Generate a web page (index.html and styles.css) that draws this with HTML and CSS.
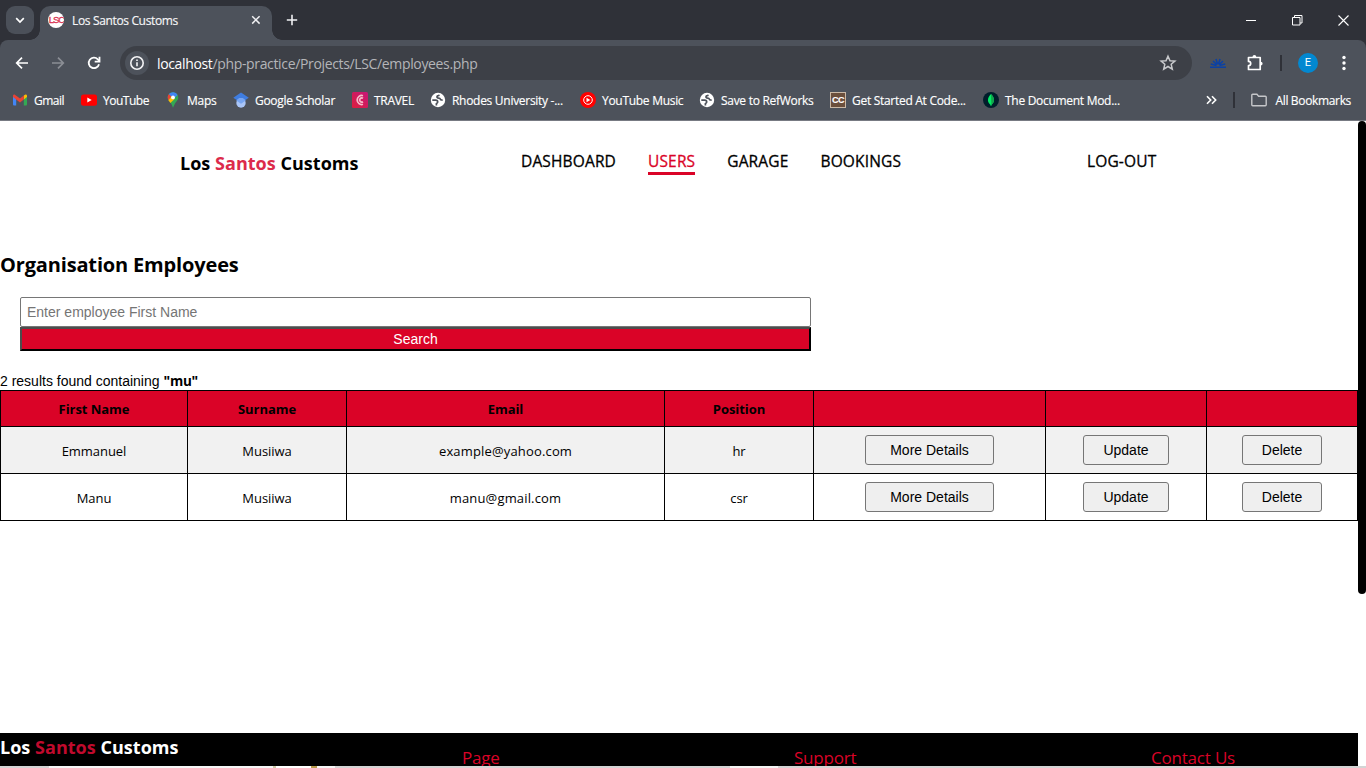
FILE: index.html
```html
<!DOCTYPE html>
<html lang="en">
<head>
<meta charset="utf-8">
<title>Los Santos Customs</title>
<link rel="stylesheet" href="styles.css">
</head>
<body>
<div class="browser">
  <div class="tabstrip">
    <div class="tab-search"><svg width="22" height="22" viewBox="0 0 22 22" fill="none" stroke="#fff" stroke-width="1.7"><path d="M7.2 9.2l3.8 3.8 3.8-3.8"/></svg></div>
    <div class="tab">
      <span class="favicon"><span>LSC</span></span>
      <span class="tab-title">Los Santos Customs</span>
      <svg class="tab-close" width="10" height="10" viewBox="0 0 10 10" stroke="#f1f1f3" stroke-width="1.5"><path d="M1.2 1.2l7.4 7.4M8.600 1.200L1.200 8.600"/></svg>
    </div>
    <svg class="new-tab" width="12" height="12" viewBox="0 0 12 12" stroke="#f1f1f3" stroke-width="1.6"><path d="M6 .8v10.400M.8 6h10.400"/></svg>
    <div class="window-controls">
      <svg width="10" height="11" viewBox="0 0 10 11"><path d="M0 5.500h10" stroke="#fff"/></svg>
      <svg width="11" height="11" viewBox="0 0 11 11" fill="none" stroke="#fff"><path d="M.5 2.500h7.500v7.500H.5zM2.500 2.500V.5h7.500V8H8"/></svg>
      <svg width="11" height="11" viewBox="0 0 11 11" stroke="#fff" stroke-width="1.100"><path d="M.5.500l10 10M10.500.500l-10 10"/></svg>
    </div>
  </div>

  <div class="toolbar">
    <div class="nav-buttons">
      <svg width="16" height="16" viewBox="0 0 16 16" fill="none" stroke="#fff" stroke-width="1.700"><path d="M14 8H3M8 2.700L2.700 8 8 13.300"/></svg>
      <svg width="16" height="16" viewBox="0 0 16 16" fill="none" stroke="#8b8e95" stroke-width="1.700"><path d="M2 8h11M8 2.700L13.300 8 8 13.300"/></svg>
      <svg width="16" height="16" viewBox="0 0 16 16" fill="none" stroke="#fff" stroke-width="1.800"><path d="M13 9.200A5.200 5.200 0 1 1 11.800 4.400L13.300 6"/><path d="M13.500 1.800v4.900H8.700" /></svg>
    </div>
    <div class="omnibox">
      <span class="site-info"><svg width="16" height="16" viewBox="0 0 16 16" fill="none" stroke="#f3f3f5" stroke-width="1.600"><circle cx="8" cy="8" r="6.200"/><path d="M8 7.200v4.100M8 4.500v1.500"/></svg></span>
      <span class="url"><b>localhost</b>/php-practice/Projects/LSC/employees.php</span>
      <svg class="star" width="18" height="18" viewBox="0 0 18 18" fill="none" stroke="#c8c9cc" stroke-width="1.500"><path d="M9 2.200l2 4.500 4.900.4-3.700 3.200 1.100 4.800L9 12.500l-4.300 2.600 1.100-4.800-3.700-3.200 4.900-.4z"/></svg>
    </div>
    <div class="toolbar-end">
      <svg width="16" height="10" viewBox="0 0 16 10" stroke="#0b41a4" stroke-width="1.600"><path d="M0 9.200h16M6.500 7.500L.8 6M7 6.800L3 3M7.600 6.500L6 1M8.400 6.500L10 1M9 6.800L13 3M9.500 7.500L15.200 6"/></svg>
      <svg width="18" height="18" viewBox="0 0 18 18" fill="none" stroke="#fff" stroke-width="1.700"><path d="M2.500 3.500h11.700v12H2.500v-3.900c1.500 0 2.200-1 2.200-2.100S4 7.400 2.500 7.400z" stroke-linejoin="round"/><path d="M6.500 3a1.900 1.900 0 0 1 3.800 0zM14.700 7.700a1.900 1.900 0 0 1 0 3.800z" fill="#fff" stroke="none"/></svg>
      <i class="divider"></i>
      <span class="avatar">E</span>
      <svg width="4" height="16" viewBox="0 0 4 16" fill="#fff"><circle cx="2" cy="2.500" r="1.700"/><circle cx="2" cy="8" r="1.700"/><circle cx="2" cy="13.500" r="1.700"/></svg>
    </div>
  </div>

  <div class="bookmarks">
    <div class="bookmark-list">
      <span class="bookmark tight"><svg width="16" height="16" viewBox="0 0 16 16"><path d="M1 3.500L4.200 6v7.500H2a1 1 0 0 1-1-1z" fill="#4285f4"/><path d="M15 3.500L11.800 6v7.500H14a1 1 0 0 0 1-1z" fill="#34a853"/><path d="M11.800 3.500L13 2.700c1-.6 2 0 2 1.200V5l-3.200 2.500z" fill="#fbbc04"/><path d="M1 5V4c0-1.200 1.200-1.900 2.200-1.100L8 6.500l3.800-3v4L8 10.400z" fill="#ea4335"/></svg>Gmail</span>
      <span class="bookmark tight"><svg width="16" height="16" viewBox="0 0 16 16"><rect y="2.400" width="16" height="11.400" rx="2.500" fill="#f00"/><path d="M6.300 5.600v5L10.700 8.100z" fill="#fff"/></svg>YouTube</span>
      <span class="bookmark"><svg width="16" height="16" viewBox="0 0 16 16"><path d="M8 .2a5.300 5.300 0 0 1 5.300 5.300c0 3-2.900 4.300-4 7.500L8 15.800l-1.100-2.700C5.800 10 2.700 8.500 2.700 5.500A5.300 5.300 0 0 1 8 .2z" fill="#34a853"/><path d="M3.400 8.200L7 4 4 2C2.400 3.500 2.300 6 3.400 8.200z" fill="#ea4335"/><path d="M3.900 2.100A5.300 5.300 0 0 1 12.600 3L8.500 7z" fill="#4285f4"/><path d="M3.400 8.200L6.600 4.300l3 2.700-4.200 4z" fill="#fbbc04"/><circle cx="8" cy="5.400" r="1.900" fill="#fff"/></svg>Maps</span>
      <span class="bookmark"><svg width="16" height="16" viewBox="0 0 16 16"><path d="M8 .5l7.800 5.200L8 11 .3 5.700z" fill="#3f7de0"/><circle cx="8" cy="11" r="4.700" fill="#a9c5f8"/><path d="M3.200 8.500Q8 3.600 12.800 8.500L8 11.700z" fill="#77a5f2"/></svg>Google Scholar</span>
      <span class="bookmark"><svg width="16" height="16" viewBox="0 0 16 16"><defs><linearGradient id="travel" x1="0" y1="1" x2="1" y2="0"><stop stop-color="#dc1f3e"/><stop offset="1" stop-color="#c51779"/></linearGradient></defs><rect width="16" height="16" rx="1.500" fill="url(#travel)"/><g fill="none" stroke="#f6bccb" stroke-width="1.700"><path d="M11 3.700a4.500 4.500 0 1 0 0 8.600"/><path d="M11 6.300a2.100 2.100 0 1 0 0 3.400"/></g></svg>TRAVEL</span>
      <span class="bookmark"><svg width="16" height="16" viewBox="0 0 16 16"><circle cx="8" cy="8" r="7.200" fill="#fff"/><path d="M2.300 8.200h3.400c1.300 0 2 .8 2 1.800 0 .9-.7 1.200-1.300 1.700v1.800M12.600 7.600c-1 .8-2.200.3-2.400-.8-.2-1-1.500-.6-2.500-.9-1.300-.5-.8-2 .5-2.300l1.400-.4" fill="none" stroke="#4d525b" stroke-width="1.700"/></svg>Rhodes University -...</span>
      <span class="bookmark"><svg width="16" height="16" viewBox="0 0 16 16"><circle cx="8" cy="8" r="8" fill="#f00"/><circle cx="8" cy="8" r="4.300" fill="none" stroke="#fff"/><path d="M6.500 5.700v4.600L10.300 8z" fill="#fff"/></svg>YouTube Music</span>
      <span class="bookmark"><svg width="16" height="16" viewBox="0 0 16 16"><circle cx="8" cy="8" r="7.200" fill="#fff"/><path d="M2.300 8.200h3.400c1.300 0 2 .8 2 1.800 0 .9-.7 1.200-1.300 1.700v1.800M12.600 7.600c-1 .8-2.200.3-2.400-.8-.2-1-1.500-.6-2.500-.9-1.300-.5-.8-2 .5-2.300l1.400-.4" fill="none" stroke="#4d525b" stroke-width="1.700"/></svg>Save to RefWorks</span>
      <span class="bookmark"><span class="cc-icon">CC</span>Get Started At Code...</span>
      <span class="bookmark"><svg width="16" height="16" viewBox="0 0 16 16"><circle cx="8" cy="8" r="8" fill="#001e2b"/><path d="M8 2c4 4 4 8 .4 11v1h-.8v-1C4 10 4 6 8 2z" fill="#00ed64"/><path d="M8 2c4 4 4 8 .4 11z" fill="#12a34b"/></svg>The Document Mod...</span>
    </div>
    <div class="bookmarks-end">
      <svg width="11" height="10" viewBox="0 0 11 10" fill="none" stroke="#fff" stroke-width="1.600"><path d="M1 1.200L4.700 5 1 8.800M6 1.200L9.700 5 6 8.800"/></svg>
      <i class="divider"></i>
      <span class="bookmark all"><svg width="16" height="16" viewBox="0 0 16 16" fill="none" stroke="#c5c6c9" stroke-width="1.400"><path d="M.8 3.200q0-.9.900-.9h4.200l1.700 1.900h6.700q.9 0 .9.900v7.700q0 .9-.9.900H1.700q-.9 0-.9-.9z"/></svg>All Bookmarks</span>
    </div>
  </div>

  <div class="viewport">
    <div class="page">
      <header class="site-header">
        <div class="logo">Los <span>Santos</span> Customs</div>
        <nav class="menu">
          <a>DASHBOARD</a><a class="active">USERS</a><a>GARAGE</a><a>BOOKINGS</a>
        </nav>
        <a class="logout">LOG-OUT</a>
      </header>
      <main class="content">
        <h2>Organisation Employees</h2>
        <form class="search">
          <input type="text" placeholder="Enter employee First Name">
          <button type="button">Search</button>
        </form>
        <p class="results">2 results found containing <b>"<span>mu</span>"</b></p>
        <table class="employees">
          <colgroup><col class="c1"><col class="c2"><col class="c3"><col class="c4"><col class="c5"><col class="c6"><col class="c7"></colgroup>
          <tr><th>First Name</th><th>Surname</th><th>Email</th><th>Position</th><th></th><th></th><th></th></tr>
          <tr><td>Emmanuel</td><td>Musiiwa</td><td class="email">example@yahoo.com</td><td>hr</td><td><button class="details">More Details</button></td><td><button class="update">Update</button></td><td><button class="delete">Delete</button></td></tr>
          <tr><td>Manu</td><td>Musiiwa</td><td class="email">manu@gmail.com</td><td>csr</td><td><button class="details">More Details</button></td><td><button class="update">Update</button></td><td><button class="delete">Delete</button></td></tr>
        </table>
      </main>
      <footer class="site-footer">
        <div class="logo">Los <span>Santos</span> Customs</div>
        <div class="footer-col">Page</div>
        <div class="footer-col">Support</div>
        <div class="footer-col">Contact Us</div>
      </footer>
    </div>
    <div class="scrollbar"><div class="thumb"></div></div>
  </div>
  <div class="screen-edge"></div>
</div>
</body>
</html>
```
FILE: styles.css
```css
* { box-sizing: border-box; }
body { margin: 0; background: #fff; color: #000; font-family: "Open Sans", "Noto Sans", sans-serif; overflow: hidden; }
svg { display: block; flex: none; }
.browser { width: 1366px; height: 768px; display: flex; flex-direction: column; background: #2f3138; }

/* Tab strip */
.tabstrip { height: 40px; display: flex; align-items: center; padding-left: 6px; flex: none; }
.tab-search { width: 28px; height: 28px; border-radius: 9px; background: #4b5059; display: flex; align-items: center; justify-content: center; }
.tab { position: relative; width: 232px; height: 34px; margin: 6px 0 0 6px; padding: 0 11px 6px 8px; border-radius: 10px 10px 0 0; background: #4d525b; display: flex; align-items: center; color: #f6f6f8; }
.tab::before, .tab::after { content: ""; position: absolute; bottom: 0; width: 10px; height: 10px; }
.tab::before { left: -10px; background: radial-gradient(circle at 0 0, transparent 9.500px, #4d525b 10px); }
.tab::after { right: -10px; background: radial-gradient(circle at 100% 0, transparent 9.500px, #4d525b 10px); }
.favicon { width: 16px; height: 16px; border-radius: 50%; background: #fff; display: flex; align-items: center; justify-content: center; overflow: hidden; color: #d9304f; font: 9.500px/16px "Liberation Sans", sans-serif; letter-spacing: -1px; -webkit-text-stroke: .3px; }
.favicon span { margin-right: -1px; }
.tab-title { flex: 1; margin-left: 8px; font-size: 12px; font-weight: 500; letter-spacing: -.35px; -webkit-text-stroke: .15px; }
.new-tab { margin-left: 14px; }
.window-controls { margin-left: auto; padding-right: 17px; display: flex; align-items: center; gap: 35.500px; }

/* Address row */
.toolbar { height: 46px; flex: none; display: flex; align-items: center; background: #4d525b; border-radius: 8px 8px 0 0; }
.nav-buttons { display: flex; gap: 20px; padding-left: 14px; width: 120px; }
.omnibox { width: 1072px; height: 34px; border-radius: 17px; background: #3d4047; display: flex; align-items: center; padding: 0 15px 0 5px; }
.site-info { width: 24px; height: 24px; border-radius: 50%; background: #4d525b; display: flex; align-items: center; justify-content: center; }
.url { flex: 1; margin-left: 8px; font-size: 14px; letter-spacing: -.35px; color: #b4b5b9; white-space: pre; }
.url b { font-weight: 400; color: #fff; }
.toolbar-end { flex: 1; display: flex; align-items: center; padding-left: 18px; }
.toolbar-end svg:nth-child(2) { margin-left: 20px; }
.toolbar-end .divider { margin-left: 16px; }
.toolbar-end .avatar { margin: 0 24px 0 16px; }
.divider { width: 2px; height: 16px; background: #2f3138; }
.avatar { width: 20px; height: 20px; border-radius: 50%; background: #0288d1; color: #fff; font: 11px/20px Roboto, sans-serif; text-align: center; }

/* Bookmarks */
.bookmarks { height: 35px; flex: none; display: flex; justify-content: space-between; padding: 0 15px 6px 12px; background: #4d525b; border-bottom: 1px solid #777a82; color: #fff; font-size: 12px; font-weight: 500; -webkit-text-stroke: .15px; }
.bookmark-list { display: grid; grid-template-columns: 69px 84px 68px 119px 78px 150px 119px 131px 153px 140px; align-items: center; }
.bookmark { display: flex; align-items: center; gap: 6px; letter-spacing: -.29px; white-space: nowrap; }
.bookmark.tight { letter-spacing: -.480px; }
.bookmark.all { gap: 8px; letter-spacing: -.340px; }
.cc-icon { width: 16px; height: 16px; background: #6b4f3c; border: 1px solid #cbb9a6; color: #fff; font: bold 9px/14px "Liberation Sans", sans-serif; letter-spacing: -.5px; text-align: center; }
.bookmarks-end { display: flex; align-items: center; gap: 16px; }

/* Page */
.viewport { flex: 1; display: flex; background: #fff; min-height: 0; overflow: hidden; }
.page { width: 1358px; display: flex; flex-direction: column; }
.site-header { height: 84px; flex: none; display: flex; align-items: center; padding-left: 180px; }
.logo { font-size: 18px; font-weight: 700; line-height: 24px; white-space: nowrap; letter-spacing: .03px; }
.logo span { color: #dc2b4b; }
.site-header .logo { width: 341px; }
.menu { width: 566px; display: flex; gap: 32px; }
.menu a, .logout { font-size: 15.500px; font-weight: 500; line-height: 21px; letter-spacing: .15px; border-bottom: 3px solid transparent; -webkit-text-stroke: .3px; }
.menu .active { color: #da0327; border-color: #da0327; }
.content { flex: 1; }
h2 { margin: 46px 0 18px; font-size: 20px; line-height: 28px; letter-spacing: -.16px; }
.search { width: 791px; margin-left: 20px; }
.search input { display: block; width: 100%; height: 30px; padding: 0 6px; border: 1px solid #767676; border-radius: 2px; font: 14px "Liberation Sans", Arial, sans-serif; }
.search input::placeholder { color: #757575; }
.search button { display: block; width: 100%; height: 24px; padding: 0; border: 2px solid; border-color: #4d4d4d #000 #000 #4d4d4d; background: #da0327; color: #fff; font: 14px "Liberation Sans", Arial, sans-serif; }
.results { margin: 22px 0 0; font: 14px/17px "Liberation Sans", Arial, sans-serif; }
.results span { font-family: "Open Sans", sans-serif; font-size: 13.500px; line-height: 1; letter-spacing: -.4px; }
.employees { width: 1358px; table-layout: fixed; border-collapse: collapse; font-size: 13px; text-align: center; }
.c1 { width: 187px; } .c2 { width: 159px; } .c3 { width: 318px; } .c4 { width: 149px; } .c5 { width: 232px; } .c6 { width: 161px; } .c7 { width: 151px; }
.employees th, .employees td { border: 1px solid #000; padding: 0; height: 47px; letter-spacing: -.05px; }
.employees .email { letter-spacing: .16px; }
.employees th { height: 36px; background: #da0327; }
.employees tr:nth-child(even) { background: #f1f1f1; }
.employees td { padding-top: 1px; }
.employees button { display: block; margin: -2px auto 0; height: 30px; padding: 0; border: 1px solid #767676; border-radius: 3px; background: #efefef; color: #000; font: 14px "Liberation Sans", Arial, sans-serif; }
.employees .details { width: 129px; }
.employees .update { width: 86px; }
.employees .delete { width: 80px; }
.site-footer { height: 33px; flex: none; display: grid; grid-template-columns: 462px 332px 357px 1fr; background: #000; color: #fff; overflow: hidden; }
.site-footer .logo { margin-top: 2px; }
.site-footer .logo span { color: #c00a2d; }
.footer-col { padding-top: 13px; color: #da0327; font-size: 17px; line-height: 24px; letter-spacing: -.2px; }
.scrollbar { width: 8px; background: #fff; }
.thumb { height: 473px; border-radius: 4px; background: #000; }
.screen-edge { height: 2px; flex: none; background: linear-gradient(90deg, #d4d4d4 49px, #f6f6f6 49px 273px, #cfcba8 273px 276px, #fff 276px 311px, #b79b4c 311px 317px, #f6f6f6 317px 335px, #d4d4d4 335px 730px, #f4f4f4 730px 778px, #d4d4d4 778px); }
```
